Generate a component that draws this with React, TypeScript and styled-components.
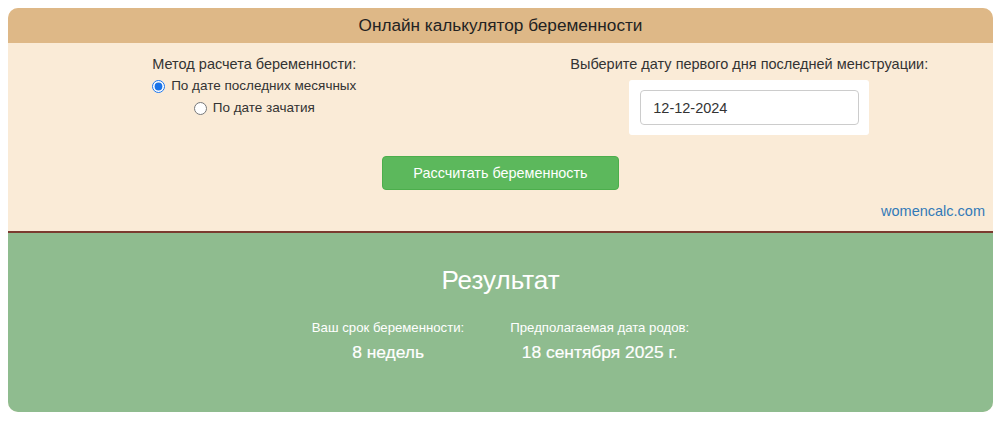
import React from 'react'
import styled, {createGlobalStyle} from "styled-components"

const GlobalStyle = createGlobalStyle`
    body {
        margin: 0;
        background: #fff;
        font-family: "Liberation Sans", Arial, sans-serif;
        color: #333;
    }
`

function App() {
    return (
        <Page>
            <GlobalStyle/>
            <Card>
                <Header>Онлайн калькулятор беременности</Header>
                <Form>
                    <Columns>
                        <Column>
                            <Label>Метод расчета беременности:</Label>
                            <RadioRow>
                                <input type="radio" name="method" defaultChecked/>
                                По дате последних месячных
                            </RadioRow>
                            <RadioRow>
                                <input type="radio" name="method"/>
                                По дате зачатия
                            </RadioRow>
                        </Column>
                        <Column shift={5}>
                            <Label>Выберите дату первого дня последней менструации:</Label>
                            <InputWrap>
                                <DateInput type="text" defaultValue="12-12-2024"/>
                            </InputWrap>
                        </Column>
                    </Columns>
                    <Button>Рассчитать беременность</Button>
                    <Credit href="#">womencalc.com</Credit>
                </Form>
                <Result>
                    <ResultTitle>Результат</ResultTitle>
                    <Stats>
                        <Stat>
                            <StatLabel>Ваш срок беременности:</StatLabel>
                            <StatValue>8 недель</StatValue>
                        </Stat>
                        <Stat>
                            <StatLabel>Предполагаемая дата родов:</StatLabel>
                            <StatValue>18 сентября 2025 г.</StatValue>
                        </Stat>
                    </Stats>
                </Result>
            </Card>
        </Page>
    )
}

export default App

const Page = styled.div`
    padding: 8px 7px 8px 8px;
`

const Card = styled.div`
    border-radius: 10px;
    overflow: hidden;
    background-color: #faebd7;
`

const Header = styled.div`
    background-color: #deb887;
    height: 35px;
    line-height: 35px;
    text-align: center;
    font-size: 17.2px;
    color: #222;
`

const Form = styled.div`
    display: flex;
    flex-direction: column;
    align-items: center;
    padding: 10px 8px 11px;
    border-bottom: 2px solid #7b3b30;
`

const Columns = styled.div`
    display: grid;
    grid-template-columns: 1fr 1fr;
    width: calc(100% + 16px);
    margin: 0 -8px;
`

const Column = styled.div<{shift?: number}>`
    display: flex;
    flex-direction: column;
    align-items: center;
    padding-left: ${p => p.shift || 0}px;
`

const Label = styled.div`
    font-size: 14.5px;
    line-height: 22px;
    color: #333;
`

const RadioRow = styled.label`
    display: flex;
    align-items: center;
    font-size: 13.5px;
    line-height: 22px;
    color: #333;
    input {
        margin: 0 6px 0 0;
        width: 13px;
        height: 13px;
        accent-color: #1a73e8;
    }
`

const InputWrap = styled.div`
    margin-top: 5px;
    background: #fff;
    padding: 10px 10px 10px 11px;
    border-radius: 3px;
`

const DateInput = styled.input`
    box-sizing: border-box;
    width: 219px;
    height: 35px;
    padding: 0 12px;
    border: 1px solid #ccc;
    border-radius: 4px;
    font-family: "Liberation Sans", Arial, sans-serif;
    font-size: 14.5px;
    color: #333;
    outline: none;
`

const Button = styled.button`
    margin-top: 21px;
    width: 237px;
    height: 34px;
    background-color: #5cb85c;
    border: 1px solid #4cae4c;
    border-radius: 4px;
    color: #fff;
    font-family: "Liberation Sans", Arial, sans-serif;
    font-size: 14.4px;
`

const Credit = styled.a`
    align-self: flex-end;
    margin-top: 12px;
    font-size: 14.5px;
    line-height: 18px;
    color: #337ab7;
    text-decoration: none;
`

const Result = styled.div`
    background-color: #8fbc8f;
    color: #fff;
    text-align: center;
    padding: 31px 0 48px;
`

const ResultTitle = styled.div`
    font-size: 26px;
    line-height: 32px;
`

const Stats = styled.div`
    display: flex;
    justify-content: center;
    gap: 46px;
    margin-top: 23px;
`

const Stat = styled.div`
    display: flex;
    flex-direction: column;
    align-items: center;
`

const StatLabel = styled.div`
    font-size: 13.2px;
    line-height: 18px;
`

const StatValue = styled.div`
    margin-top: 3px;
    font-size: 17.4px;
    line-height: 24px;
    -webkit-text-stroke: 0.2px #fff;
`
